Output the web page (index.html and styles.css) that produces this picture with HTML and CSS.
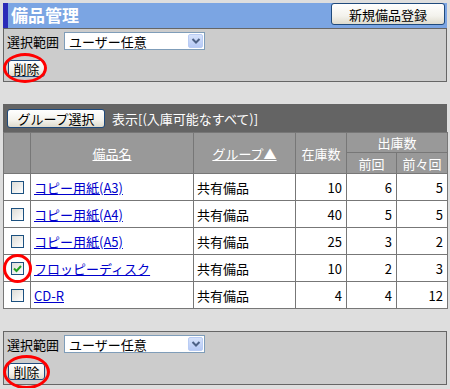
FILE: index.html
```html
<!DOCTYPE html>
<html lang="ja">
<head>
    <meta charset="UTF-8">
    <title>備品管理</title>
    <link rel="stylesheet" href="styles.css">
</head>
<body>
    <div class="page">
        <div class="title-bar">
            <h1>備品管理</h1>
            <button class="btn btn-new">新規備品登録</button>
        </div>

        <div class="panel">
            <div class="panel-row">
                <span class="label">選択範囲</span>
                <div class="select">
                    <span>ユーザー任意</span>
                    <span class="select-arrow">
                        <svg viewBox="0 0 10 8" width="10" height="8">
                            <path d="M1.5 2 L5 5.5 L8.5 2" fill="none" stroke="#4d6185" stroke-width="2"/>
                        </svg>
                    </span>
                </div>
            </div>
            <div class="panel-row">
                <span class="marked">
                    <button class="btn btn-small">削除</button>
                    <span class="ring ring-btn"></span>
                </span>
            </div>
        </div>

        <div class="list">
            <div class="list-bar">
                <button class="btn btn-group">グループ選択</button>
                <span>表示[(入庫可能なすべて)]</span>
            </div>
            <table class="items">
                <colgroup>
                    <col style="width: 27px">
                    <col style="width: 163px">
                    <col style="width: 102px">
                    <col style="width: 51px">
                    <col style="width: 50px">
                    <col style="width: 51px">
                </colgroup>
                <thead>
                    <tr class="head-top">
                        <th rowspan="2"></th>
                        <th rowspan="2"><a href="#">備品名</a></th>
                        <th rowspan="2"><a href="#">グループ▲</a></th>
                        <th rowspan="2">在庫数</th>
                        <th colspan="2">出庫数</th>
                    </tr>
                    <tr class="head-sub">
                        <th>前回</th>
                        <th>前々回</th>
                    </tr>
                </thead>
                <tbody>
                    <tr>
                        <td class="check"><span class="box"></span></td>
                        <td><a href="#">コピー用紙(A3)</a></td>
                        <td>共有備品</td>
                        <td class="num">10</td>
                        <td class="num">6</td>
                        <td class="num">5</td>
                    </tr>
                    <tr>
                        <td class="check"><span class="box"></span></td>
                        <td><a href="#">コピー用紙(A4)</a></td>
                        <td>共有備品</td>
                        <td class="num">40</td>
                        <td class="num">5</td>
                        <td class="num">5</td>
                    </tr>
                    <tr>
                        <td class="check"><span class="box"></span></td>
                        <td><a href="#">コピー用紙(A5)</a></td>
                        <td>共有備品</td>
                        <td class="num">25</td>
                        <td class="num">3</td>
                        <td class="num">2</td>
                    </tr>
                    <tr>
                        <td class="check">
                            <span class="marked">
                                <span class="box checked">
                                    <svg viewBox="0 0 11 11" width="11" height="11">
                                        <path d="M2 5.5 L4.5 8 L9 3" fill="none" stroke="#21a121" stroke-width="2"/>
                                    </svg>
                                </span>
                                <span class="ring ring-box"></span>
                            </span>
                        </td>
                        <td><a href="#">フロッピーディスク</a></td>
                        <td>共有備品</td>
                        <td class="num">10</td>
                        <td class="num">2</td>
                        <td class="num">3</td>
                    </tr>
                    <tr>
                        <td class="check"><span class="box"></span></td>
                        <td><a href="#">CD-R</a></td>
                        <td>共有備品</td>
                        <td class="num">4</td>
                        <td class="num">4</td>
                        <td class="num">12</td>
                    </tr>
                </tbody>
            </table>
        </div>

        <div class="panel panel-bottom">
            <div class="panel-row">
                <span class="label">選択範囲</span>
                <div class="select">
                    <span>ユーザー任意</span>
                    <span class="select-arrow">
                        <svg viewBox="0 0 10 8" width="10" height="8">
                            <path d="M1.5 2 L5 5.5 L8.5 2" fill="none" stroke="#4d6185" stroke-width="2"/>
                        </svg>
                    </span>
                </div>
            </div>
            <div class="panel-row">
                <span class="marked">
                    <button class="btn btn-small">削除</button>
                    <span class="ring ring-btn-lg"></span>
                </span>
            </div>
        </div>
    </div>
</body>
</html>
```

FILE: styles.css
```css
* {
    margin: 0;
    padding: 0;
    box-sizing: border-box;
}

body {
    background: #dedede;
    padding: 3px;
    font-family: "Noto Sans CJK JP", "DejaVu Sans", sans-serif;
    font-size: 13px;
    color: #000;
}

.page {
    width: 444px;
}

/* title bar */
.title-bar {
    display: flex;
    justify-content: space-between;
    align-items: flex-start;
    height: 25px;
    background: #7ba5e3;
    border-left: 5px solid #2b2bb8;
    padding-right: 2px;
}

.title-bar h1 {
    color: #fff;
    font-size: 17px;
    font-weight: bold;
    line-height: 24px;
    padding-left: 3px;
}

/* xp style buttons */
.btn {
    font-family: inherit;
    font-size: 13px;
    color: #000;
    background: linear-gradient(#ffffff, #f3f2ec 60%, #dedbcd);
    border: 1px solid #1f4a7c;
    border-radius: 3px;
    line-height: 1;
    cursor: pointer;
}

.btn-new {
    width: 114px;
    height: 22px;
}

.btn-small {
    width: 37px;
    height: 17px;
}

.btn-group {
    width: 98px;
    height: 19px;
}

/* panels */
.panel {
    background: #cccccc;
    border: 1px solid #666;
    padding: 3px 3px 4px;
    display: flex;
    flex-direction: column;
    gap: 9px;
}

.panel-bottom {
    margin-top: 22px;
}

.panel-row {
    display: flex;
    align-items: center;
    gap: 5px;
    height: 18px;
}

.panel-row .marked {
    margin-left: 1px;
}

.select {
    display: flex;
    align-items: center;
    justify-content: space-between;
    width: 141px;
    height: 18px;
    background: #fff;
    border: 1px solid #7f9db9;
    padding-left: 4px;
}

.select-arrow {
    display: flex;
    align-items: center;
    justify-content: center;
    width: 15px;
    height: 14px;
    margin-right: 1px;
    background: linear-gradient(#d6e2fb, #b6c9f5);
    border: 1px solid #b9ccf4;
    border-radius: 2px;
}

/* red marks drawn over the screenshot */
.marked {
    position: relative;
    display: inline-flex;
}

.ring {
    position: absolute;
    border: 3px solid #f00;
    border-radius: 50%;
    pointer-events: none;
}

.ring-btn {
    left: -5px;
    top: -7px;
    width: 44px;
    height: 30px;
}

.ring-btn-lg {
    left: -5px;
    top: -8px;
    width: 47px;
    height: 34px;
}

.ring-box {
    left: -8px;
    top: -8px;
    width: 29px;
    height: 29px;
}

/* list */
.list {
    margin-top: 22px;
}

.list-bar {
    display: flex;
    align-items: center;
    gap: 7px;
    height: 28px;
    background: #646464;
    padding: 0 4px;
    color: #fff;
}

.items {
    width: 444px;
    border-collapse: collapse;
    table-layout: fixed;
    background: #fff;
}

.items th,
.items td {
    border: 1px solid #777;
    white-space: nowrap;
}

.items th {
    background: #999;
    color: #fff;
    font-weight: normal;
    text-align: center;
}

.items th a {
    color: #fff;
}

.head-top th {
    height: 20px;
}

.head-sub th {
    height: 21px;
}

.items td {
    height: 27px;
    padding: 0 3px;
}

.items td a {
    color: #0000cc;
}

.items td.num {
    text-align: right;
    padding-right: 4px;
}

.items td.check {
    padding: 0 0 0 7px;
}

.box {
    display: flex;
    align-items: center;
    justify-content: center;
    width: 13px;
    height: 13px;
    border: 1px solid #1c5180;
    background: linear-gradient(135deg, #dcdcd7, #ffffff);
}
```
